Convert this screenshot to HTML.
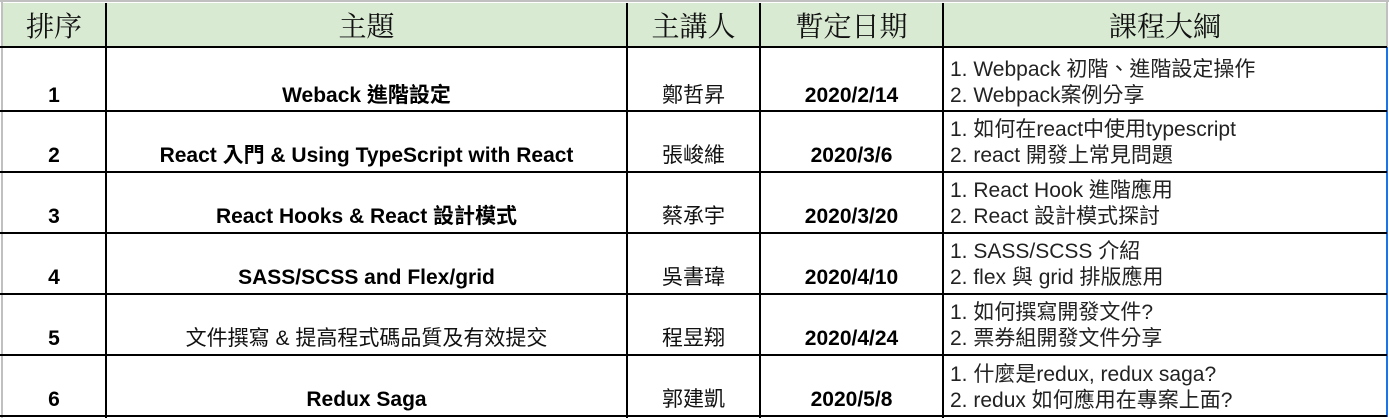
<!DOCTYPE html>
<html><head><meta charset="utf-8"><style>
body{margin:0;width:1389px;height:418px;background:#fff;position:relative;overflow:hidden;font-family:"Liberation Sans","Noto Sans CJK TC",sans-serif}
.h{position:absolute;background:#000}
.g{position:absolute;background:#c0c0c0}
.t{position:absolute;text-align:center;white-space:nowrap}
.hd{font-family:"Liberation Serif","Noto Serif CJK TC",serif;font-size:28px;line-height:32px;color:#111}
.b{font-weight:bold;font-size:21px;line-height:22px;color:#000}
.c{font-size:21px;line-height:22px;color:#111}
.r{position:absolute;left:950px;font-size:21px;line-height:26px;color:#222;white-space:nowrap}
</style></head><body>
<div style="position:absolute;left:2px;top:3px;width:1384px;height:44px;background:#d9ead3"></div>
<div class="g" style="left:0;top:0;width:1389px;height:2px"></div>
<div class="g" style="left:1px;top:0;width:2px;height:418px"></div>
<div class="g" style="left:1386px;top:0;width:2px;height:47px"></div>
<div style="position:absolute;left:1386px;top:47px;width:2px;height:370px;background:#1a73e8"></div>
<div class="h" style="left:0;top:46px;width:1387px;height:2px"></div>
<div class="h" style="left:0;top:110px;width:1387px;height:2px"></div>
<div class="h" style="left:0;top:171px;width:1387px;height:2px"></div>
<div class="h" style="left:0;top:232px;width:1387px;height:2px"></div>
<div class="h" style="left:0;top:293px;width:1387px;height:2px"></div>
<div class="h" style="left:0;top:354px;width:1387px;height:2px"></div>
<div class="h" style="left:0;top:415px;width:1387px;height:2px"></div>
<div class="h" style="left:105px;top:3px;width:2px;height:415px"></div>
<div class="h" style="left:626px;top:3px;width:2px;height:415px"></div>
<div class="h" style="left:759px;top:3px;width:2px;height:415px"></div>
<div class="h" style="left:942px;top:3px;width:2px;height:415px"></div>
<div class="t hd" style="left:3px;width:102px;top:12px">排序</div>
<div class="t hd" style="left:107px;width:519px;top:12px">主題</div>
<div class="t hd" style="left:628px;width:131px;top:12px">主講人</div>
<div class="t hd" style="left:761px;width:181px;top:12px">暫定日期</div>
<div class="t hd" style="left:944px;width:442px;top:12px">課程大綱</div>

<div class="t b" style="left:3px;width:102px;top:85px">1</div>
<div class="t b" style="left:107px;width:519px;top:85px">Weback 進階設定</div>
<div class="t c" style="left:628px;width:131px;top:85px">鄭哲昇</div>
<div class="t b" style="left:761px;width:181px;top:85px">2020/2/14</div>
<div class="r" style="top:57px">1. Webpack 初階、進階設定操作<br>2. Webpack案例分享</div>

<div class="t b" style="left:3px;width:102px;top:145px">2</div>
<div class="t b" style="left:107px;width:519px;top:145px">React 入門 &amp; Using TypeScript with React</div>
<div class="t c" style="left:628px;width:131px;top:145px">張峻維</div>
<div class="t b" style="left:761px;width:181px;top:145px">2020/3/6</div>
<div class="r" style="top:117px">1. 如何在react中使用typescript<br>2. react 開發上常見問題</div>

<div class="t b" style="left:3px;width:102px;top:206px">3</div>
<div class="t b" style="left:107px;width:519px;top:206px">React Hooks &amp; React 設計模式</div>
<div class="t c" style="left:628px;width:131px;top:206px">蔡承宇</div>
<div class="t b" style="left:761px;width:181px;top:206px">2020/3/20</div>
<div class="r" style="top:178px">1. React Hook 進階應用<br>2. React 設計模式探討</div>

<div class="t b" style="left:3px;width:102px;top:267px">4</div>
<div class="t b" style="left:107px;width:519px;top:267px">SASS/SCSS and Flex/grid</div>
<div class="t c" style="left:628px;width:131px;top:267px">吳書瑋</div>
<div class="t b" style="left:761px;width:181px;top:267px">2020/4/10</div>
<div class="r" style="top:239px">1. SASS/SCSS 介紹<br>2. flex 與 grid 排版應用</div>

<div class="t b" style="left:3px;width:102px;top:328px">5</div>
<div class="t c" style="left:107px;width:519px;top:328px">文件撰寫 &amp; 提高程式碼品質及有效提交</div>
<div class="t c" style="left:628px;width:131px;top:328px">程昱翔</div>
<div class="t b" style="left:761px;width:181px;top:328px">2020/4/24</div>
<div class="r" style="top:300px">1. 如何撰寫開發文件?<br>2. 票券組開發文件分享</div>

<div class="t b" style="left:3px;width:102px;top:389px">6</div>
<div class="t b" style="left:107px;width:519px;top:389px">Redux Saga</div>
<div class="t c" style="left:628px;width:131px;top:389px">郭建凱</div>
<div class="t b" style="left:761px;width:181px;top:389px">2020/5/8</div>
<div class="r" style="top:362px">1. 什麼是redux, redux saga?<br>2. redux 如何應用在專案上面?</div>
</body></html>
